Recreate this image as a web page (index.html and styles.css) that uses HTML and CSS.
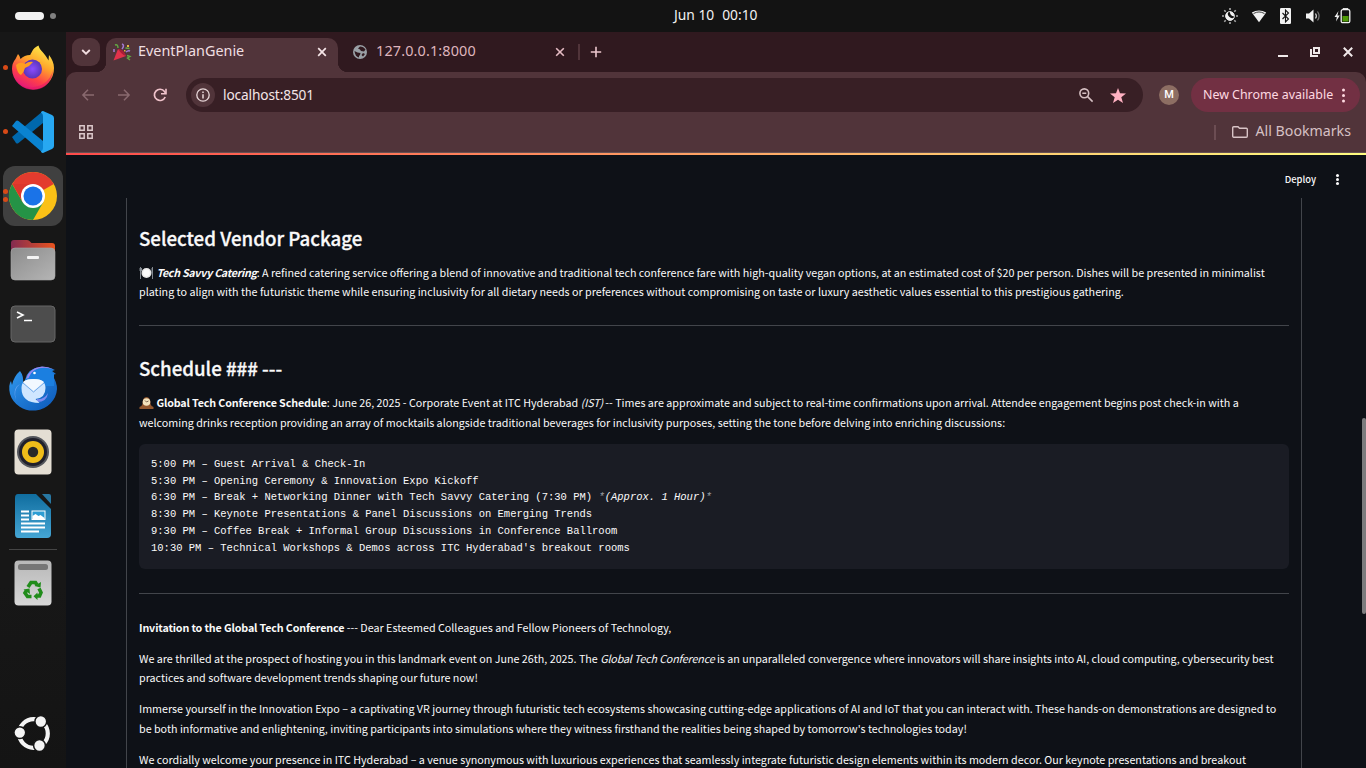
FILE: index.html
```html
<!DOCTYPE html>
<html lang="en">
<head>
<meta charset="utf-8">
<title>EventPlanGenie</title>
<link rel="stylesheet" href="styles.css">
</head>
<body>
<header class="topbar">
  <div class="workspaces"><span class="pill"></span><span class="dot"></span></div>
  <div class="clock"><span>Jun 10</span><span>00:10</span></div>
  <div class="tray">
    <svg width="16" height="16" viewBox="0 0 16 16"><path d="M8 0v2M8 14v2M0 8h2M14 8h2M2.300 2.300l1.400 1.400M12.300 12.300l1.400 1.400M2.300 13.700l1.400-1.400M12.300 3.700l1.400-1.400" stroke="#aaa" stroke-width="1.600"/><circle cx="8" cy="8" r="4.400" fill="#131313" stroke="#ddd" stroke-width="1"/><path d="M6.500 3.600A4.600 4.600 0 1 0 12.400 9.500 4.300 4.300 0 0 1 6.500 3.600zM8 4.500a3.800 3.800 0 0 0 4.200 3.800A4.500 4.500 0 0 0 8 3.500z" fill="#f2f2f2"/></svg>
    <svg width="16" height="16" viewBox="0 0 16 16"><path d="M.8 4.500Q8 .3 15.200 4.500L8 14.300z" fill="#f2f2f2"/><path d="M2.500 5.600Q8 2.300 13.500 5.600" fill="none" stroke="#444" stroke-width="1"/></svg>
    <svg width="12" height="16" viewBox="0 0 12 16"><rect width="11" height="16" rx="1.200" fill="#f2f2f2"/><path d="M2.500 5l6 6-3 3V2l3 3-6 6" fill="none" stroke="#131313" stroke-width="1.100"/></svg>
    <svg width="16" height="16" viewBox="0 0 16 16"><path d="M1 5.500h3l4.500-4v13L4 10.500H1z" fill="#f2f2f2"/><path d="M10.500 5.500q1.700 2.500 0 5" fill="none" stroke="#ddd" stroke-width="1.200"/><path d="M12.500 3.500q3.200 4.500 0 9" fill="none" stroke="#777" stroke-width="1.200"/></svg>
    <svg width="17" height="16" viewBox="0 0 17 16"><path d="M4.500 3L.5 9h2.300L2 13.500 5.700 7.500H3.400z" fill="#f2f2f2"/><path d="M9 1.500V.6h5v.9" fill="none" stroke="#f2f2f2"/><rect x="7.200" y="1.700" width="8.600" height="13" rx="1.500" fill="none" stroke="#f2f2f2" stroke-width="1.300"/><rect x="8.500" y="8" width="6" height="5.500" fill="#4e9a06"/></svg>
  </div>
</header>
<div class="desktop">
<nav class="dock">
  <div class="app one"><svg width="44" height="46" viewBox="0 0 44 46"><defs><linearGradient id="fx" x1=".8" y1="0" x2=".3" y2="1"><stop offset="0" stop-color="#fff44f"/><stop offset=".4" stop-color="#ffa72b"/><stop offset=".72" stop-color="#ff4048"/><stop offset="1" stop-color="#e0147f"/></linearGradient><radialGradient id="fg"><stop offset="0" stop-color="#8a4cff"/><stop offset="1" stop-color="#5b35b9"/></radialGradient></defs><path d="M7 9q2 2 2.500 5 4-4 9.500-4c1 0 2-7 8.500-9.500 1 5 6.500 7.500 10 15l.5-5.500c3 4 5 8 5 13A21 21 0 1 1 1 24Q1 18 4.500 14z" fill="url(#fx)"/><path d="M4 33q7 12 19 9 15-2 19-17-2 19-20 20Q10 45 4 33z" fill="#e51469" opacity=".55"/><circle cx="21.500" cy="24" r="9.500" fill="url(#fg)"/><path d="M5 20q4-4 9-1 4-3 8-2-3 4-8 6-1 4-4 7Q6 28 5 20z" fill="#ff9e20"/></svg></div>
  <div class="app one"><svg width="42" height="44" viewBox="0 0 42 44"><path d="M0 27l4 6q1 1 2.500 0L31 13V1z" fill="#0068ad"/><path d="M0 16l4-5q1-1 2.500 0L31 31v12z" fill="#0a83d1"/><path d="M31 1l9 4q2 1 2 3v28q0 2-2 3l-9 4q-2 0-2-2 2 0 2-4V7q0-4-2-4 0-2 2-2z" fill="#27a8f2"/></svg></div>
  <div class="app active two"><svg width="48" height="48" viewBox="0 0 48 48"><circle cx="24" cy="24" r="24" fill="#fbc116"/><path d="M24 24L3.200 12A24 24 0 0 1 44.800 12z" fill="#e33b2e"/><path d="M3.200 12A24 24 0 0 0 24 48L34.400 30 24 24 13.600 30z" fill="#259346"/><path d="M3.200 12L13.600 30 24 24 24 12z" fill="#dc362c"/><circle cx="24" cy="24" r="12" fill="#fff"/><circle cx="24" cy="24" r="9.500" fill="#1a73e8"/></svg></div>
  <div class="app"><svg width="46" height="42" viewBox="0 0 46 42"><defs><linearGradient id="fo"><stop offset="0" stop-color="#832b51"/><stop offset="1" stop-color="#ea541f"/></linearGradient><linearGradient id="fd" x1="0" y1="0" x2="1" y2="1"><stop offset="0" stop-color="#8c8c8c"/><stop offset="1" stop-color="#b5b5b5"/></linearGradient></defs><path d="M1 15V4q0-3 3-3h13q2 0 3 1.500L21.500 4H42q3 0 3 3v9z" fill="url(#fo)"/><rect x="1" y="9" width="44" height="32" rx="4" fill="url(#fd)" stroke="#aaa" stroke-width=".6"/><rect x="17" y="17" width="12" height="3" rx="1" fill="#f4f4f4"/></svg></div>
  <div class="app"><svg width="46" height="38" viewBox="0 0 46 38"><rect x="1" y="1" width="44" height="36" rx="4" fill="#4d4d4d" stroke="#666"/><path d="M7 7l6 3-6 3" fill="none" stroke="#fff" stroke-width="1.600"/><path d="M14 15.500h8" stroke="#fff" stroke-width="1.500"/></svg></div>
  <div class="app"><svg class="bird" width="48" height="48" viewBox="0 0 48 48"><defs><linearGradient id="tb" x1="0" y1="0" x2="1" y2="1"><stop offset="0" stop-color="#329bf0"/><stop offset="1" stop-color="#0b57b8"/></linearGradient></defs><path d="M16 15Q19 3 31 2q6-1 15 3l-3 1 4 3-4 1q5 7 5 14A24 23 0 0 1 1 29Q-1 20 2 16l1 4Q5 11 11 6q4 5 3 13z" fill="url(#tb)"/><path d="M17 14Q20 3 33 1.500q6 0 12 3-9-3-15-1-7 2-8 8z" fill="#9b86ef"/><path d="M20 12Q23 3.500 34 3q6 0 10 3l-2 1 3 2v12H20z" fill="#1b7fe0"/><path d="M11 19Q4 24 7 35q-4-12 4-16z" fill="#71a7f5"/><circle cx="25.500" cy="8" r="1.300" fill="#fff"/><path d="M28 34q7 1 11-6-1 9-11 9z" fill="#7f8cf0"/><path d="M12.500 23q0-9 12-9t12 9q0 10-10 11l4 4q-18 0-18-15z" fill="#cfe6ff"/><path d="M14 17l10.500 9L35 17q-3-3-10.500-3T14 17z" fill="#f2f8ff"/><path d="M14 18l10.500 9L35 18" fill="none" stroke="#75abe9" stroke-width="1"/></svg></div>
  <div class="app"><svg width="38" height="46" viewBox="0 0 38 46"><rect x=".5" y=".5" width="37" height="45" rx="4" fill="#e4ded3"/><circle cx="19" cy="23" r="16" fill="#54565c"/><circle cx="19" cy="23" r="14" fill="#20202b"/><circle cx="19" cy="23" r="11" fill="#f0bd1a"/><circle cx="19" cy="23" r="5.200" fill="#282828"/></svg></div>
  <div class="app"><svg width="38" height="46" viewBox="0 0 38 46"><defs><linearGradient id="wr" x1="0" y1="0" x2="0" y2="1"><stop offset="0" stop-color="#106d9f"/><stop offset="1" stop-color="#45a6d5"/></linearGradient></defs><path d="M4 1h18l15 15v25q0 4-4 4H4q-3 0-3-4V5q0-4 3-4z" fill="url(#wr)"/><path d="M28 1h7q2 0 2 2v8z" fill="#2878a3"/><path d="M7 18.500h8M7 22.500h8M7 26.500h8M7 30.500h24M7 34.500h24M7 38.500h18" stroke="#fff" stroke-width="2"/><rect x="18" y="18" width="13" height="8.500" fill="#2d9dd3" stroke="#fff"/><path d="M18.500 26v-3l3-2 3 2 2-1 4 3v1z" fill="#fff"/></svg></div>
  <hr class="dock-rule">
  <div class="app trash"><svg width="38" height="46" viewBox="0 0 38 46"><defs><linearGradient id="tr" x1="0" y1="0" x2="0" y2="1"><stop offset="0" stop-color="#b8b8b8"/><stop offset="1" stop-color="#d7d7d7"/></linearGradient></defs><rect x=".5" y=".5" width="37" height="45" rx="4" fill="url(#tr)"/><rect x="4" y="4" width="30" height="6" rx="2.500" fill="#767676"/><g fill="none" stroke="#218c1b" stroke-width="3.600"><path d="M14 27l3-4.500h4.500l1.500 2.500"/><path d="M25 28.500l2 4-1.500 3.500H23"/><path d="M17.500 36.500h-4L11 33l1.500-2.500"/></g><path d="M20.500 26l6 1.500 .5-5.500zM23.500 32.500v7.500l-4-3.800zM9.500 29.500l6-1 .5 5.500z" fill="#218c1b"/></svg></div>
  <div class="app launcher"><svg width="38" height="38" viewBox="0 0 38 38"><circle cx="19.500" cy="19.500" r="14.300" fill="none" stroke="#f4f4f4" stroke-width="4.200"/><g fill="#f4f4f4" stroke="#161616" stroke-width="1.500"><circle cx="26.800" cy="7.500" r="5.900"/><circle cx="5.800" cy="18.600" r="5.900"/><circle cx="25.500" cy="31.500" r="5.900"/></g></svg></div>
</nav>
<section class="window">
  <div class="tabstrip">
    <div class="tabsearch"><svg width="10" height="6" viewBox="0 0 10 6"><path d="M1.200 1l3.800 3.600L8.800 1" fill="none" stroke="#f2dde0" stroke-width="1.900"/></svg></div>
    <div class="tab">
      <svg width="18" height="18" viewBox="0 0 18 18"><path d="M.5 17.500L5 6q5 1.500 8 7z" fill="#e0324b"/><path d="M5 6q5.500-.5 8 7-4-1-8-7z" fill="#a91e37"/><path d="M1 9V6M9 1q3 1 0 5M13 9q2-2 4-1" fill="none" stroke="#a27bd4" stroke-width="1.500"/><path d="M2 2q3-1 3 3M14 12.500l3 1-2.500 1.500 2.500 2" fill="none" stroke="#63a944" stroke-width="1.400"/><path d="M12.500 5l4 .5" stroke="#63a944" stroke-width="1.300"/><path d="M11 7h1.500v1.500H11zM14 2h2v2h-2z" fill="#e7b63f"/></svg>
      <span class="tab-title">EventPlanGenie</span>
      <svg class="close" width="10" height="10" viewBox="0 0 10 10"><path d="M1.200 1.200l7.600 7.600M8.800 1.200L1.200 8.800" stroke="#f6e6e8" stroke-width="1.700"/></svg>
    </div>
    <div class="tab2">
      <svg width="14" height="14" viewBox="0 0 14 14"><circle cx="7" cy="7" r="7" fill="#9aa0a6"/><path d="M1.500 6l3 1.500 3 .5-.5 2-1 1v1.500q-4-1-4.500-6.500zM7 1.500L5 3.500l2 1 1 1.500 3 .5 1.500-2Q10.500 1.500 7 1.500zM10 8l2 1-2 2.500-1.500-1.500z" fill="#30191f"/></svg>
      <span class="tab-title ip">127.0.0.1:8000</span>
      <svg class="close" width="10" height="10" viewBox="0 0 10 10"><path d="M1.200 1.200l7.600 7.600M8.800 1.200L1.200 8.800" stroke="#e6bcc4" stroke-width="1.600"/></svg>
    </div>
    <span class="tabsep"></span>
    <svg width="12" height="12" viewBox="0 0 12 12"><path d="M6 .8v10.400M.8 6h10.400" stroke="#ecc6cd" stroke-width="1.600"/></svg>
    <div class="controls">
      <svg width="10" height="10" viewBox="0 0 10 10"><path d="M0 9h10" stroke="#f0e8e9" stroke-width="2"/></svg>
      <svg width="11" height="10" viewBox="0 0 11 10"><path d="M4 1h5v5H4zM1 2v7h7" fill="none" stroke="#f0e8e9" stroke-width="2"/></svg>
      <svg width="10" height="10" viewBox="0 0 10 10"><path d="M.8.800l8.400 8.400M9.200.800L.8 9.200" stroke="#f0e8e9" stroke-width="2"/></svg>
    </div>
  </div>
  <div class="chrome">
  <div class="toolbar">
    <svg width="12" height="12" viewBox="0 0 12 12"><path d="M12 6H1M6 .8L.9 6 6 11.200" fill="none" stroke="#89696f" stroke-width="1.500"/></svg>
    <svg width="12" height="12" viewBox="0 0 12 12"><path d="M0 6h11M6 .8L11.100 6 6 11.200" fill="none" stroke="#89696f" stroke-width="1.500"/></svg>
    <svg width="14" height="14" viewBox="0 0 14 14"><path d="M12.200 9A5.600 5.600 0 1 1 11.500 3.500L12.500 5" fill="none" stroke="#f0c3cb" stroke-width="1.700"/><path d="M13 .8v5H8" fill="none" stroke="#f0c3cb" stroke-width="1.600"/></svg>
    <div class="omnibox">
      <span class="info"><svg width="14" height="14" viewBox="0 0 14 14"><circle cx="7" cy="7" r="6.200" fill="none" stroke="#e9d8da" stroke-width="1.300"/><path d="M7 6.200v4.200M7 3.500V5" stroke="#e9d8da" stroke-width="1.500"/></svg></span>
      <span class="url">localhost:8501</span>
      <svg width="14" height="14" viewBox="0 0 14 14"><circle cx="5.300" cy="5.300" r="4.400" fill="none" stroke="#d6c0c3" stroke-width="1.600"/><path d="M8.600 8.600l5 5M3.300 5.300h4" stroke="#d6c0c3" stroke-width="1.500"/></svg>
      <svg class="star" width="16" height="15" viewBox="0 0 16 15"><path d="M8 0l2 5.300 6 .3-4.700 3.600L13 15l-5-3.300L3 15l1.700-5.800L0 5.600l6-.3z" fill="#ffb1c2"/></svg>
    </div>
    <span class="avatar">M</span>
    <div class="update"><span>New Chrome available</span><i class="kebab"></i></div>
  </div>
  <div class="bookmarks">
    <svg width="14" height="14" viewBox="0 0 14 14"><path d="M.8.800h4.400v4.400H.800zM8.800.800h4.400v4.400H8.800zM.8 8.800h4.400v4.400H.800zM8.800 8.800h4.400v4.400H8.800z" fill="none" stroke="#dbc8ca" stroke-width="1.500"/></svg>
    <span class="bm-sep"></span>
    <svg width="16" height="12" viewBox="0 0 16 12"><path d="M.7 10V1.700q0-1 1-1H6l1.500 1.600h6.800q1 0 1 1V10q0 1.200-1 1.200H1.700q-1 0-1-1.200z" fill="none" stroke="#d8c3c6" stroke-width="1.400"/></svg>
    <span class="bm-text">All Bookmarks</span>
  </div>
  </div>
  <main class="page">
    <div class="deploy"><span>Deploy</span><i class="kebab small"></i></div>
    <article class="box">
      <h3>Selected Vendor Package</h3>
      <p class="tight"><svg class="emoji" width="15" height="12" viewBox="0 0 15 12"><circle cx="7.500" cy="6" r="5" fill="#e9e9e9"/><circle cx="7.500" cy="6" r="3.400" fill="#fafafa"/><path d="M1.500 0v12M1 1v3h1.500V1M13.500 0v12M13 1v5" stroke="#8d949b" stroke-width=".9" fill="none"/></svg> <b><em>Tech Savvy Catering</em></b>: A refined catering service offering a blend of innovative and traditional tech conference fare with high-quality vegan options, at an estimated cost of $20 per person. Dishes will be presented in minimalist<br>plating to align with the futuristic theme while ensuring inclusivity for all dietary needs or preferences without compromising on taste or luxury aesthetic values essential to this prestigious gathering.</p>
      <hr>
      <h3>Schedule ### ---</h3>
      <p><svg class="emoji" width="15" height="12" viewBox="0 0 15 12"><path d="M.5 12v-2q2 0 3-3Q3.500 0 7.500 0t4 7q1 3 3 3v2z" fill="#94582e"/><circle cx="7.500" cy="5" r="3.800" fill="#f4e3bd"/><path d="M6 3.500L7.500 5l2-1" fill="none" stroke="#634c38" stroke-width=".8"/></svg> <b>Global Tech Conference Schedule</b>: June 26, 2025 - Corporate Event at ITC Hyderabad <em>(IST)</em> -- Times are approximate and subject to real-time confirmations upon arrival. Attendee engagement begins post check-in with a<br>welcoming drinks reception providing an array of mocktails alongside traditional beverages for inclusivity purposes, setting the tone before delving into enriching discussions:</p>
<pre>5:00 PM – Guest Arrival &amp; Check-In
5:30 PM – Opening Ceremony &amp; Innovation Expo Kickoff
6:30 PM – Break + Networking Dinner with Tech Savvy Catering (7:30 PM) <i><s>*</s>(Approx. 1 Hour)<s>*</s></i>
8:30 PM – Keynote Presentations &amp; Panel Discussions on Emerging Trends
9:30 PM – Coffee Break + Informal Group Discussions in Conference Ballroom
10:30 PM – Technical Workshops &amp; Demos across ITC Hyderabad's breakout rooms</pre>
      <hr>
      <p><b>Invitation to the Global Tech Conference</b> --- Dear Esteemed Colleagues and Fellow Pioneers of Technology,</p>
      <p>We are thrilled at the prospect of hosting you in this landmark event on June 26th, 2025. The <em>Global Tech Conference</em> is an unparalleled convergence where innovators will share insights into AI, cloud computing, cybersecurity best<br>practices and software development trends shaping our future now!</p>
      <p>Immerse yourself in the Innovation Expo – a captivating VR journey through futuristic tech ecosystems showcasing cutting-edge applications of AI and IoT that you can interact with. These hands-on demonstrations are designed to<br>be both informative and enlightening, inviting participants into simulations where they witness firsthand the realities being shaped by tomorrow's technologies today!</p>
      <p>We cordially welcome your presence in ITC Hyderabad – a venue synonymous with luxurious experiences that seamlessly integrate futuristic design elements within its modern decor. Our keynote presentations and breakout</p>
    </article>
    <span class="scroll"></span>
  </main>
</section>
</div>
</body>
</html>
```
FILE: styles.css
```css
* { box-sizing: border-box; }
html, body { margin: 0; height: 768px; overflow: hidden; }
body { display: flex; flex-direction: column; background: #131313; font-family: "Noto Sans", sans-serif; }
svg { display: block; flex: none; overflow: visible; }
.topbar { height: 32px; flex: none; display: grid; grid-template-columns: 659px auto 1fr; align-items: center; padding: 0 15px; color: #f2f2f2; }
.workspaces { display: flex; align-items: center; gap: 6px; }
.pill { width: 29px; height: 8px; border-radius: 4px; background: #f2f2f2; }
.dot { width: 6px; height: 6px; border-radius: 3px; background: #808080; }
.clock { display: flex; gap: 8px; font-size: 13.800px; line-height: 28px; padding-bottom: 2px; }
.tray { display: flex; justify-content: flex-end; align-items: center; gap: 13px; }
.desktop { flex: 1; display: flex; min-height: 0; }
.dock { width: 66px; flex: none; background: linear-gradient(#171717 75%, #141414); display: flex; flex-direction: column; align-items: center; padding-top: 6px; }
.app { width: 60px; height: 60px; margin-bottom: 4px; flex: none; display: flex; align-items: center; justify-content: center; border-radius: 12px; position: relative; }
.active { background: #404040; }
.one::before, .two::before, .two::after { content: ""; position: absolute; left: 0; top: 27px; width: 5px; height: 5px; border-radius: 3px; background: #d84a17; }
.two::before { top: 23px; }
.two::after { top: 31px; }
.bird { margin-top: 2px; }
.dock-rule { width: 48px; height: 1px; border: 0; background: #454545; margin: -1px 0 3px; flex: none; }
.trash { margin-bottom: 90px; }
.window { flex: 1; min-width: 0; display: flex; flex-direction: column; background: #30191f; }
.tabstrip { height: 40px; flex: none; display: flex; align-items: center; padding-left: 6px; padding-right: 13px; }
.tabsearch { width: 28px; height: 28px; border-radius: 9px; background: #51343a; display: flex; align-items: center; justify-content: center; margin-right: 6px; }
.tab { position: relative; width: 232px; height: 34px; margin-top: 6px; border-radius: 10px 10px 0 0; background: #51343a; display: flex; align-items: center; padding: 0 11px 6px 7px; color: #f0dfe1; }
.tab::before, .tab::after { content: ""; position: absolute; bottom: 0; width: 10px; height: 10px; }
.tab::before { left: -10px; background: radial-gradient(circle at 0 0, transparent 10px, #51343a 10.5px); }
.tab::after { right: -10px; background: radial-gradient(circle at 100% 0, transparent 10px, #51343a 10.5px); }
.tab-title { font-size: 14.400px; line-height: 20px; margin-left: 7px; padding-bottom: 2px; white-space: nowrap; }
.close { margin-left: auto; }
.tab2 { width: 227px; display: flex; align-items: center; padding-left: 15px; color: #dfb5bd; }
.ip { margin-left: 9px; letter-spacing: .15px; }
.tabsep { width: 2px; height: 16px; background: #51343a; margin: 0 10px 0 13px; }
.controls { margin-left: auto; display: flex; gap: 22px; }
.chrome { height: 81px; flex: none; background: #51343a; border-radius: 10px 10px 0 0; border-bottom: 1px solid #665154; }
.toolbar { height: 46px; display: flex; align-items: center; padding: 0 6px 0 16px; }
.toolbar > svg { margin-right: 24px; }
.toolbar > svg:nth-of-type(2) { margin-right: 23px; }
.toolbar > svg:nth-of-type(3) { margin: 0 19px 0 0; }
.omnibox { width: 957px; height: 34px; border-radius: 17px; background: #381f25; display: flex; align-items: center; padding: 0 17px 0 5px; }
.info { width: 24px; height: 24px; border-radius: 12px; background: #51343a; display: flex; align-items: center; justify-content: center; }
.url { color: #f4e6e8; font-size: 13.700px; letter-spacing: -.13px; line-height: 20px; margin: 0 auto 0 8px; }
.star { margin-left: 17px; }
.avatar { width: 20px; height: 20px; border-radius: 10px; background: #8d6e63; color: #fff; font: 500 11px/20px Roboto, sans-serif; text-align: center; margin: 0 12px 0 16px; }
.update { width: 169px; height: 34px; border-radius: 17px; background: #723043; color: #ffd9e1; font-size: 12.400px; line-height: 34px; padding: 0 15px 0 12px; display: flex; align-items: center; justify-content: space-between; white-space: nowrap; }
.kebab { width: 3px; height: 3px; border-radius: 2px; background: #ffd9e1; box-shadow: 0 -5.500px #ffd9e1, 0 5.500px #ffd9e1; }
.bookmarks { height: 28px; display: flex; align-items: center; padding: 0 15px 0 13px; color: #d6c0c4; }
.bm-sep { width: 2px; height: 15px; background: #6c4d53; margin: 0 16px 0 auto; }
.bm-text { font-size: 14.200px; line-height: 20px; margin-left: 8px; padding-bottom: 2px; white-space: nowrap; }
.page { flex: 1; min-height: 0; background: #0e1117; position: relative; overflow: hidden; color: #fafafa; display: flex; flex-direction: column; font-family: "Noto Sans CJK JP", "Source Sans Pro", sans-serif; }
.page::before { content: ""; height: 2px; flex: none; background: linear-gradient(90deg, #ff4b4b, #fffd80); }
.deploy { height: 43px; flex: none; display: flex; align-items: center; justify-content: flex-end; gap: 20px; padding: 6px 27px 0 0; font-size: 9.400px; font-weight: 500; }
.deploy span { padding-bottom: 2px; }
.small { width: 3px; height: 3px; background: #fafafa; box-shadow: 0 -4px #fafafa, 0 4px #fafafa; }
.box { width: 1176px; flex: 1; margin-left: 60px; border: solid #42454b; border-width: 0 1px; padding: 22px 12px 0; }
h3 { font-size: 18.700px; font-weight: 500; line-height: 32px; margin: 0 0 9px; padding-top: 2px; white-space: nowrap; -webkit-text-stroke: .3px; }
p { font-size: 10.742px; line-height: 19.200px; margin: 0 0 12px; white-space: nowrap; }
b { font-weight: 700; letter-spacing: -.15px; }
em { letter-spacing: -.16px; }
b em { letter-spacing: -.3px; }
.emoji { display: inline-block; vertical-align: -2px; }
.box hr { border: 0; height: 1px; background: #42454b; margin: 24px 0; }
pre { margin: 0; height: 125px; border-radius: 6px; background: #1a1c24; padding: 12px; font: 10.500px/16.800px "Liberation Mono", monospace; }
pre s { color: #9a9ca2; text-decoration: none; }
.scroll { position: absolute; right: 0; top: 265px; width: 4px; height: 196px; background: #7c7c7e; border-radius: 2px; }
```
